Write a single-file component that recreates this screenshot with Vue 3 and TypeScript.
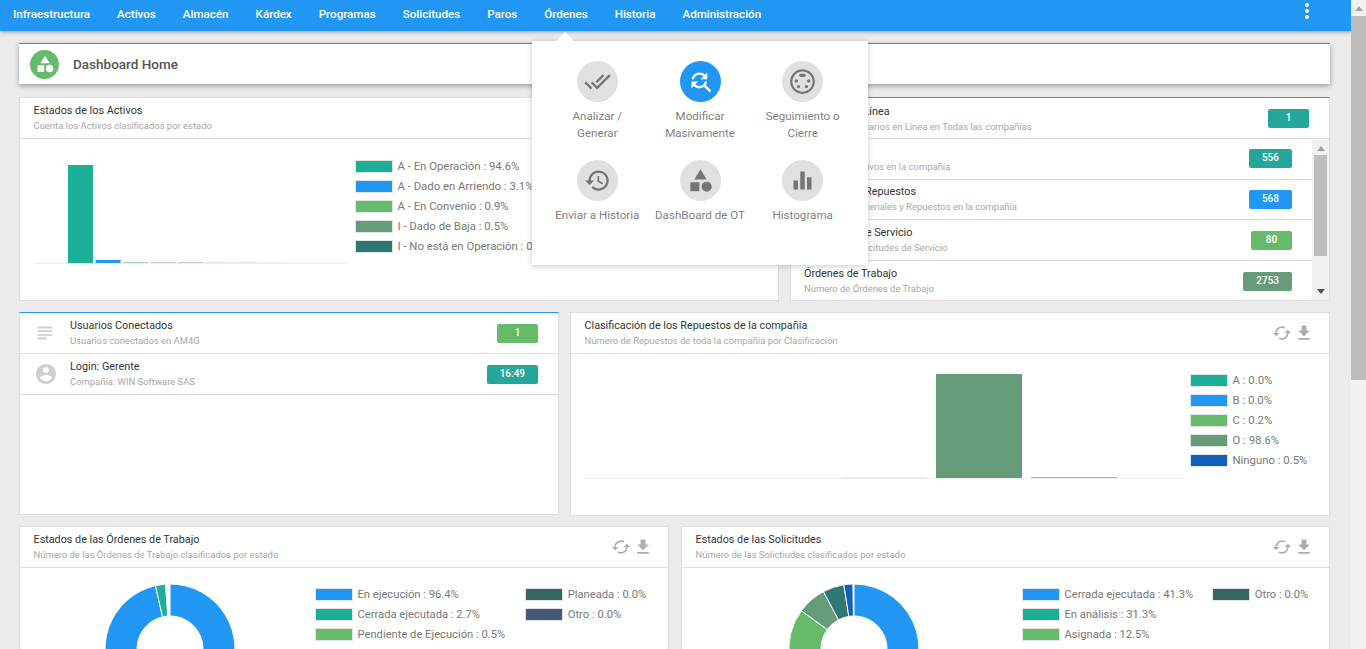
<script setup lang="ts">
interface Legend { label: string; color: string }
interface Slice { color: string; from: number; to: number }

const C = { teal: '#1cb098', blue: '#2196f3', green: '#66bb6a', sage: '#669b7a', dark: '#2f7772', deep: '#356662', slate: '#44597a', navy: '#0f60ba' }

const menu = ['Infraestructura', 'Activos', 'Almacén', 'Kárdex', 'Programas', 'Solicitudes', 'Paros', 'Órdenes', 'Historia', 'Administración']

const activos: Legend[] = [
  { label: 'A - En Operación : 94.6%', color: C.teal },
  { label: 'A - Dado en Arriendo : 3.1%', color: C.blue },
  { label: 'A - En Convenio : 0.9%', color: C.green },
  { label: 'I - Dado de Baja : 0.5%', color: C.sage },
  { label: 'I - No está en Operación : 0.5%', color: C.dark }
]
const repuestos: Legend[] = [
  { label: 'A : 0.0%', color: C.teal },
  { label: 'B : 0.0%', color: C.blue },
  { label: 'C : 0.2%', color: C.green },
  { label: 'O : 98.6%', color: C.sage },
  { label: 'Ninguno : 0.5%', color: C.navy }
]
const ordenes: Legend[] = [
  { label: 'En ejecución : 96.4%', color: C.blue },
  { label: 'Cerrada ejecutada : 2.7%', color: C.teal },
  { label: 'Pendiente de Ejecución : 0.5%', color: C.green },
  { label: 'Planeada : 0.0%', color: C.deep },
  { label: 'Otro : 0.0%', color: C.slate }
]
const solicitudes: Legend[] = [
  { label: 'Cerrada ejecutada : 41.3%', color: C.blue },
  { label: 'En análisis : 31.3%', color: C.teal },
  { label: 'Asignada : 12.5%', color: C.green },
  { label: 'Otro : 0.0%', color: C.deep }
]

const activosBars = [
  { x: 33, h: 98, color: C.teal }, { x: 60.6, h: 3, color: C.blue }, { x: 88.2, h: 1, color: '#a5d6a7' },
  { x: 115.8, h: 1, color: '#b5d0bf' }, { x: 143.4, h: 1, color: '#b5d0cd' }, { x: 171, h: 1, color: '#dce9f5' },
  { x: 198.6, h: 1, color: '#e6e6e6' }, { x: 226.2, h: 1, color: '#eeeeee' }
]

const stats = [
  { title: 'Activos', sub: 'Número de Activos en la compañía', value: '556', color: '#26a69a' },
  { title: 'Materiales y Repuestos', sub: 'Número de Materiales y Repuestos en la compañía', value: '568', color: '#2196f3' },
  { title: 'Solicitudes de Servicio', sub: 'Número de Solicitudes de Servicio', value: '80', color: '#66bb6a' },
  { title: 'Órdenes de Trabajo', sub: 'Número de Órdenes de Trabajo', value: '2753', color: '#669b7a' }
]

function arc(s: Slice): string {
  const R = 65, r = 33
  const pt = (rad: number, deg: number): string => {
    const a = (deg * Math.PI) / 180
    return `${(rad * Math.sin(a)).toFixed(2)} ${(-rad * Math.cos(a)).toFixed(2)}`
  }
  const large = s.to - s.from > 180 ? 1 : 0
  return `M${pt(R, s.from)}A${R} ${R} 0 ${large} 1 ${pt(R, s.to)}L${pt(r, s.to)}A${r} ${r} 0 ${large} 0 ${pt(r, s.from)}Z`
}

const donutOrdenes: Slice[] = [
  { color: C.blue, from: 0, to: 347 },
  { color: C.teal, from: 347, to: 356 }
]
const donutSolicitudes: Slice[] = [
  { color: C.blue, from: 0, to: 148.7 },
  { color: C.teal, from: 148.7, to: 261 },
  { color: C.green, from: 261, to: 306 },
  { color: C.sage, from: 306, to: 332 },
  { color: C.dark, from: 332, to: 351 },
  { color: C.navy, from: 351, to: 359 }
]

const pathCached = 'M19 8l-4 4h3c0 3.31-2.69 6-6 6-1.01 0-1.97-.25-2.8-.7l-1.46 1.46C8.97 19.54 10.43 20 12 20c4.42 0 8-3.58 8-8h3l-4-4zM6 12c0-3.31 2.69-6 6-6 1.01 0 1.97.25 2.8.7l1.46-1.46C15.03 4.46 13.57 4 12 4c-4.42 0-8 3.58-8 8H1l4 4 4-4H6z'
const pathDownload = 'M19 9h-4V3H9v6H5l7 7 7-7zM5 18v2h14v-2H5z'
const pathCategory = 'M12 2l-5.5 9h11zM3 13.5h8v8H3zM17.5 13a4.5 4.5 0 1 0 0 9 4.5 4.5 0 0 0 0-9z'

const popItems = [
  { label: 'Analizar / Generar', d: 'M18 7l-1.41-1.41-6.34 6.34 1.41 1.41L18 7zm4.24-1.41L11.66 16.17 7.48 12l-1.41 1.41L11.66 19l12-12-1.42-1.41zM.41 13.41L6 19l1.41-1.41L1.83 12 .41 13.41z', active: false },
  { label: 'Modificar Masivamente', d: 'M11 6c1.38 0 2.63.56 3.54 1.46L12 10h6V4l-2.05 2.05C14.68 4.78 12.93 4 11 4c-3.53 0-6.43 2.61-6.92 6H6.1c.46-2.28 2.48-4 4.9-4zm5.64 9.14c.66-.9 1.12-1.97 1.28-3.14H15.9c-.46 2.28-2.48 4-4.9 4-1.38 0-2.63-.56-3.54-1.46L10 12H4v6l2.05-2.05C7.32 17.22 9.07 18 11 18c1.55 0 2.98-.51 4.14-1.36L20 21.49 21.49 20l-4.85-4.86z', active: true },
  { label: 'Seguimiento o Cierre', d: 'M8 11.5c0-.83-.67-1.5-1.5-1.5S5 10.67 5 11.5 5.67 13 6.5 13 8 12.33 8 11.5zm7-5c0-.83-.67-1.5-1.5-1.5h-3C9.67 5 9 5.67 9 6.5S9.67 8 10.5 8h3c.83 0 1.5-.67 1.5-1.5zM8.5 15c-.83 0-1.5.67-1.5 1.5S7.67 18 8.5 18s1.5-.67 1.5-1.5S9.33 15 8.5 15zM12 1C5.93 1 1 5.93 1 12s4.93 11 11 11 11-4.93 11-11S18.07 1 12 1zm0 20c-4.96 0-9-4.04-9-9s4.04-9 9-9 9 4.04 9 9-4.04 9-9 9zm5.5-11c-.83 0-1.5.67-1.5 1.5s.67 1.5 1.5 1.5 1.5-.67 1.5-1.5-.67-1.5-1.5-1.5zm-2 5c-.83 0-1.5.67-1.5 1.5s.67 1.5 1.5 1.5 1.5-.67 1.5-1.5-.67-1.5-1.5-1.5z', active: false },
  { label: 'Enviar a Historia', d: 'M13 3c-4.97 0-9 4.03-9 9H1l3.89 3.89.07.14L9 12H6c0-3.87 3.13-7 7-7s7 3.13 7 7-3.13 7-7 7c-1.93 0-3.68-.79-4.94-2.06l-1.42 1.42C8.27 19.99 10.51 21 13 21c4.97 0 9-4.03 9-9s-4.03-9-9-9zm-1 5v5l4.28 2.54.72-1.21-3.5-2.08V8H12z', active: false },
  { label: 'DashBoard de OT', d: pathCategory, active: false },
  { label: 'Histograma', d: 'M10 20h4V4h-4v16zm-6 0h4v-8H4v8zM16 9v11h4V9h-4z', active: false }
]
</script>

<template>
  <div class="shell">
    <div class="page">
      <nav class="topbar">
        <a v-for="m in menu" :key="m" class="nav-link">{{ m }}</a>
        <span class="kebab"><i></i><i></i><i></i></span>
      </nav>

      <div class="content">
        <header class="title-card">
          <span class="title-icon">
            <svg viewBox="0 0 24 24" width="20" height="20"><path :d="pathCategory" fill="#fff" /></svg>
          </span>
          <h1>Dashboard Home</h1>
        </header>

        <div class="row row-a">
          <section class="card">
            <div class="card-head chart-head">
              <div class="heads">
                <div class="t">Estados de los Activos</div>
                <div class="s">Cuenta los Activos clasificados por estado</div>
              </div>
              <div class="tools">
                <svg viewBox="0 0 24 24" width="20" height="20"><path :d="pathCached" /></svg>
                <svg viewBox="0 0 24 24" width="20" height="20"><path :d="pathDownload" /></svg>
              </div>
            </div>
            <div class="chart-body body-a">
              <svg class="plot" width="315" height="126" viewBox="0 0 315 126">
                <rect x="0" y="124" width="313" height="1" fill="#eeeeee" />
                <rect v-for="b in activosBars" :key="b.x" :x="b.x" :y="124 - b.h" width="25" :height="b.h" :fill="b.color" />
              </svg>
              <ul class="legend">
                <li v-for="l in activos" :key="l.label"><b :style="{ background: l.color }"></b>{{ l.label }}</li>
              </ul>
            </div>
          </section>

          <section class="card blue-top">
            <div class="stat head-stat">
              <div class="heads">
                <div class="t">Usuarios en Línea</div>
                <div class="s">Número de Usuarios en Línea en Todas las compañías</div>
              </div>
              <span class="badge badge-first">1</span>
            </div>
            <div class="stat-scroll">
              <div class="stat-list">
                <div v-for="s in stats" :key="s.title" class="stat">
                  <div class="heads">
                    <div class="t">{{ s.title }}</div>
                    <div class="s">{{ s.sub }}</div>
                  </div>
                  <span class="badge" :style="{ background: s.color }">{{ s.value }}</span>
                </div>
              </div>
              <div class="mini-bar">
                <span class="up"></span>
                <span class="mini-thumb"></span>
                <span class="down"></span>
              </div>
            </div>
          </section>
        </div>

        <div class="row row-b">
          <section class="card blue-top users">
            <div class="user-row">
              <svg class="user-icon" viewBox="0 0 24 24" width="22" height="22"><path d="M14 17H4v2h10v-2zm6-8H4v2h16V9zM4 15h16v-2H4v2zM4 5v2h16V5H4z" /></svg>
              <div class="heads">
                <div class="t">Usuarios Conectados</div>
                <div class="s">Usuarios conectados en AM4G</div>
              </div>
              <span class="badge" style="background: #66bb6a">1</span>
            </div>
            <div class="user-row">
              <svg class="user-icon" viewBox="0 0 24 24" width="24" height="24"><path d="M12 2C6.48 2 2 6.48 2 12s4.48 10 10 10 10-4.48 10-10S17.52 2 12 2zm0 3c1.66 0 3 1.34 3 3s-1.34 3-3 3-3-1.34-3-3 1.34-3 3-3zm0 14.2c-2.5 0-4.71-1.28-6-3.22.03-1.99 4-3.08 6-3.08 1.99 0 5.97 1.09 6 3.08-1.29 1.94-3.5 3.22-6 3.22z" /></svg>
              <div class="heads">
                <div class="t">Login: Gerente</div>
                <div class="s">Compañía: WIN Software SAS</div>
              </div>
              <span class="badge" style="background: #26a69a">16:49</span>
            </div>
          </section>

          <section class="card">
            <div class="card-head chart-head">
              <div class="heads">
                <div class="t">Clasificación de los Repuestos de la compañía</div>
                <div class="s">Número de Repuestos de toda la compañía por Clasificación</div>
              </div>
              <div class="tools">
                <svg viewBox="0 0 24 24" width="20" height="20"><path :d="pathCached" /></svg>
                <svg viewBox="0 0 24 24" width="20" height="20"><path :d="pathDownload" /></svg>
              </div>
            </div>
            <div class="chart-body body-b">
              <svg class="plot" width="600" height="126" viewBox="0 0 600 126">
                <rect x="0" y="124" width="599" height="1" fill="#eeeeee" />
                <rect x="256" y="123" width="86" height="1" fill="#e6e6e6" />
                <rect x="351" y="20" width="86" height="104" fill="#669b7a" />
                <rect x="446" y="123" width="86" height="1" fill="#8db4e0" />
              </svg>
              <ul class="legend">
                <li v-for="l in repuestos" :key="l.label"><b :style="{ background: l.color }"></b>{{ l.label }}</li>
              </ul>
            </div>
          </section>
        </div>

        <div class="row row-c">
          <section class="card">
            <div class="card-head chart-head">
              <div class="heads">
                <div class="t">Estados de las Órdenes de Trabajo</div>
                <div class="s">Número de las Órdenes de Trabajo clasificados por estado</div>
              </div>
              <div class="tools">
                <svg viewBox="0 0 24 24" width="20" height="20"><path :d="pathCached" /></svg>
                <svg viewBox="0 0 24 24" width="20" height="20"><path :d="pathDownload" /></svg>
              </div>
            </div>
            <div class="chart-body body-c1">
              <svg class="donut" width="134" height="134" viewBox="-67 -67 134 134">
                <path v-for="s in donutOrdenes" :key="s.from" :d="arc(s)" :fill="s.color" stroke="#fff" stroke-width="1" />
              </svg>
              <ul class="legend two-col">
                <li v-for="l in ordenes" :key="l.label"><b :style="{ background: l.color }"></b>{{ l.label }}</li>
              </ul>
            </div>
          </section>

          <section class="card">
            <div class="card-head chart-head">
              <div class="heads">
                <div class="t">Estados de las Solicitudes</div>
                <div class="s">Número de las Solictiudes clasificados por estado</div>
              </div>
              <div class="tools">
                <svg viewBox="0 0 24 24" width="20" height="20"><path :d="pathCached" /></svg>
                <svg viewBox="0 0 24 24" width="20" height="20"><path :d="pathDownload" /></svg>
              </div>
            </div>
            <div class="chart-body body-c2">
              <svg class="donut" width="134" height="134" viewBox="-67 -67 134 134">
                <path v-for="s in donutSolicitudes" :key="s.from" :d="arc(s)" :fill="s.color" stroke="#fff" stroke-width="1" />
              </svg>
              <ul class="legend two-col">
                <li v-for="l in solicitudes" :key="l.label"><b :style="{ background: l.color }"></b>{{ l.label }}</li>
              </ul>
            </div>
          </section>
        </div>
      </div>

      <div class="popover">
        <span class="pop-arrow"></span>
        <a v-for="p in popItems" :key="p.label" class="pop-item">
          <span class="pop-circle" :class="{ active: p.active }">
            <svg viewBox="0 0 24 24" width="27" height="27"><path :d="p.d" /></svg>
          </span>
          <span class="pop-label">{{ p.label }}</span>
        </a>
      </div>
    </div>

    <div class="page-bar">
      <span class="up"></span>
      <span class="page-thumb"></span>
    </div>
  </div>
</template>

<style>
html, body { margin: 0; height: 649px; overflow: hidden; background: #ebebeb; }
</style>

<style scoped>
.shell { display: flex; width: 1366px; height: 649px; font-family: Roboto, "Liberation Sans", sans-serif; overflow: hidden; }
.page { position: relative; width: 1351px; height: 649px; overflow: hidden; background: #ebebeb; }

.topbar { position: relative; z-index: 2; display: flex; align-items: center; height: 31px; padding: 0 0 3px 13px; box-sizing: border-box; gap: 27px; background: #2196f3; box-shadow: 0 1px 4px rgba(0, 0, 0, .35); }
.nav-link { color: #fff; font-size: 11.6px; font-weight: 500; white-space: nowrap; }
.kebab { position: absolute; top: 3px; left: 1305px; display: flex; flex-direction: column; gap: 1.6px; }
.kebab i { display: block; width: 4.2px; height: 4.2px; border-radius: 50%; background: #fff; }

.content { padding: 12px 21px 0 19px; }
.title-card { display: flex; align-items: center; height: 41px; box-sizing: border-box; padding-left: 11px; background: #fff; border-top: 1px solid #2196f3; box-shadow: 0 2px 5px rgba(0, 0, 0, .35); }
.title-icon { display: flex; align-items: center; justify-content: center; width: 29px; height: 29px; border-radius: 50%; background: #66bb6a; }
.title-card h1 { margin: 0 0 0 14px; color: #555; font-size: 13.5px; font-weight: 500; }

.row { display: grid; column-gap: 11px; align-items: start; }
.row-a { grid-template-columns: 760px 540px; margin-top: 13px; }
.row-b { grid-template-columns: 540px 760px; margin-top: 11px; }
.row-c { grid-template-columns: 650px 649px; column-gap: 12px; margin-top: 10px; }

.card { box-sizing: border-box; background: #fff; border: 1px solid #dedede; }
.blue-top { border-top-color: #2196f3; }
.row-a .card { height: 204px; }
.row-b .card { height: 204px; }
.row-b .users { height: 203px; }
.row-c .card { height: 210px; }

.card-head { display: flex; align-items: center; height: 41px; box-sizing: border-box; border-bottom: 1px solid #dedede; }
.chart-head { padding: 0 15px 0 13.5px; justify-content: space-between; }
.heads { min-width: 0; }
.t { color: #333; font-size: 10.8px; line-height: 15px; white-space: nowrap; }
.s { color: #a6a6a6; font-size: 9.45px; line-height: 15px; white-space: nowrap; }
.tools { display: flex; gap: 2px; }
.tools svg { fill: #adadad; }

.chart-body { display: flex; align-items: flex-start; }
.legend { margin: 0; padding: 0; list-style: none; color: #777; font-size: 11.35px; }
.legend li { display: flex; align-items: center; height: 20px; white-space: nowrap; }
.legend b { flex: none; width: 36px; height: 11px; margin-right: 4.5px; border: 1px solid #e3e3e3; }
.body-a { padding: 0 0 0 15px; }
.body-a .legend { margin: 17px 0 0 5px; }
.body-b { padding: 0 0 0 14px; }
.body-b .legend { margin: 16px 0 0 5px; }
.body-c1 { padding: 14px 0 0 83px; }
.body-c1 .legend { margin-left: 78px; padding-top: 2px; }
.body-c2 { padding: 14px 0 0 105px; }
.body-c2 .legend { margin-left: 101px; padding-top: 2px; }
.donut { flex: none; }
.two-col { display: grid; grid-template-rows: repeat(3, 20px); grid-auto-flow: column; column-gap: 20px; font-size: 11.2px; }
.body-c2 .two-col { column-gap: 19px; }

.stat { display: flex; align-items: center; justify-content: space-between; height: 40.67px; box-sizing: border-box; padding: 0 20px 0 13px; border-bottom: 1px solid #dedede; }
.head-stat { justify-content: flex-start; height: 41px; }
.head-stat .heads { padding-top: 1px; }
.head-stat .badge-first { margin-left: auto; background: #26a69a; }
.stat-scroll { display: flex; height: 161px; overflow: hidden; }
.stat-list { flex: 1; min-width: 0; }
.stat-list .stat:last-child { border-bottom: 0; }
.mini-bar { flex: none; display: flex; flex-direction: column; align-items: center; width: 17px; height: 161px; box-sizing: border-box; padding-top: 7px; background: #f1f1f1; }
.mini-thumb { width: 13px; height: 101px; margin-top: 4px; background: #bdbdbd; }
.up { width: 0; height: 0; border-left: 4px solid transparent; border-right: 4px solid transparent; border-bottom: 5px solid #a3a3a3; }
.down { width: 0; height: 0; margin-top: auto; margin-bottom: 6px; border-left: 4px solid transparent; border-right: 4px solid transparent; border-top: 5px solid #505050; }

.badge { flex: none; min-width: 41px; height: 19px; box-sizing: border-box; padding: 0 13px 2px; border-radius: 2px; color: #fff; font-size: 10px; font-weight: 500; line-height: 17px; text-align: center; }

.user-row { display: flex; align-items: center; height: 41px; box-sizing: border-box; padding: 0 20px 0 14px; border-bottom: 1px solid #dedede; }
.user-icon { flex: none; fill: #cfcfcf; }
.user-row .heads { flex: 1; margin-left: 14px; padding-bottom: 1px; }
.user-row:nth-child(2) .heads { margin-left: 12px; }

.popover { position: absolute; z-index: 3; top: 41px; left: 532px; display: grid; grid-template-columns: repeat(3, 102.7px); grid-template-rows: 99px 99px; justify-content: center; width: 336px; height: 224px; box-sizing: border-box; padding-top: 20px; background: #fff; box-shadow: 0 1px 6px rgba(0, 0, 0, .22); }
.pop-arrow { position: absolute; top: -9px; left: 24px; width: 0; height: 0; border-left: 9px solid transparent; border-right: 9px solid transparent; border-bottom: 9px solid #fff; }
.pop-item { display: flex; flex-direction: column; align-items: center; text-align: center; }
.pop-circle { display: flex; align-items: center; justify-content: center; width: 41px; height: 41px; border-radius: 50%; background: #e0e0e0; }
.pop-circle svg { fill: #757575; }
.pop-circle.active { background: #2196f3; }
.pop-circle.active svg { fill: #fff; }
.pop-label { width: 88px; margin-top: 6px; color: #808080; font-size: 11.6px; line-height: 17px; white-space: normal; }
.pop-item:nth-child(n+5) .pop-label { width: 110px; }

.page-bar { display: flex; flex-direction: column; align-items: center; width: 15px; height: 649px; box-sizing: border-box; padding-top: 6px; background: #f1f1f1; }
.page-thumb { width: 15px; height: 364px; margin-top: 5px; background: #bdbdbd; }
</style>
